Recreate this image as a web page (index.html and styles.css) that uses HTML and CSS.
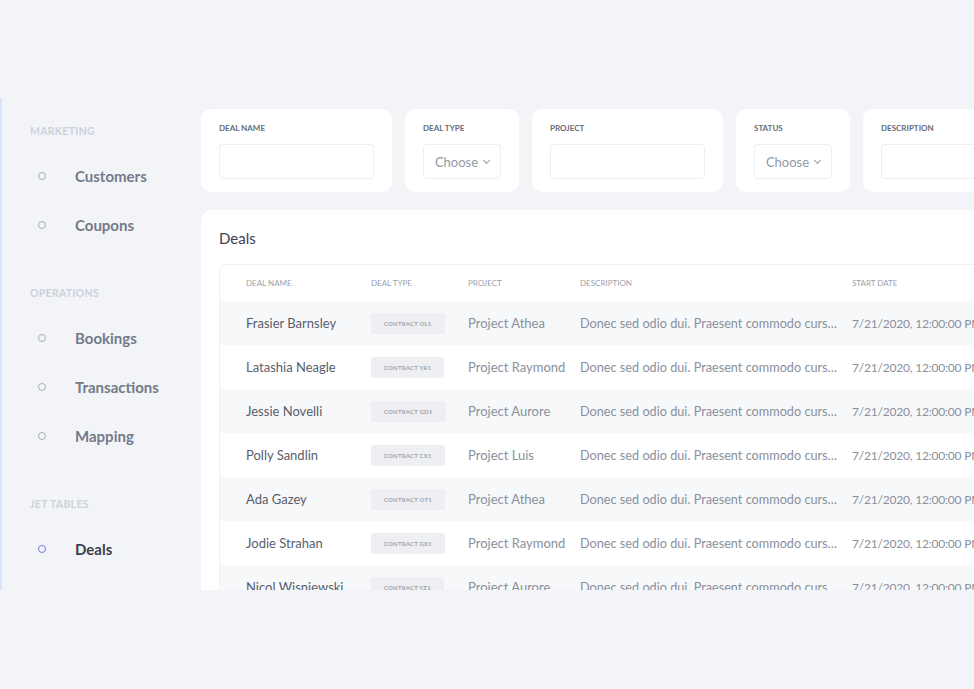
FILE: index.html
```html
<!DOCTYPE html>
<html lang="en">
<head>
    <meta charset="UTF-8">
    <meta name="viewport" content="width=device-width, initial-scale=1.0">
    <title>Deals</title>
    <link rel="stylesheet" href="styles.css">
</head>
<body>

    <div class="frame">
        <!-- Sidebar navigation -->
        <nav class="sidebar">
            <div class="nav-section">Marketing</div>
            <a class="nav-item"><span class="dot"></span>Customers</a>
            <a class="nav-item"><span class="dot"></span>Coupons</a>

            <div class="nav-section">Operations</div>
            <a class="nav-item"><span class="dot"></span>Bookings</a>
            <a class="nav-item"><span class="dot"></span>Transactions</a>
            <a class="nav-item"><span class="dot"></span>Mapping</a>

            <div class="nav-section">Jet Tables</div>
            <a class="nav-item active"><span class="dot"></span>Deals</a>
        </nav>

        <main class="main">
            <!-- Filters -->
            <div class="filters">
                <div class="filter-card wide">
                    <label>Deal Name</label>
                    <input type="text" class="field">
                </div>
                <div class="filter-card">
                    <label>Deal Type</label>
                    <div class="select">Choose <span class="chev"></span></div>
                </div>
                <div class="filter-card wide">
                    <label>Project</label>
                    <input type="text" class="field">
                </div>
                <div class="filter-card">
                    <label>Status</label>
                    <div class="select">Choose <span class="chev"></span></div>
                </div>
                <div class="filter-card wide">
                    <label>Description</label>
                    <input type="text" class="field">
                </div>
            </div>

            <!-- Deals table -->
            <div class="card">
                <h2>Deals</h2>
                <div class="table-wrap">
                    <table id="dealsTable">
                        <thead>
                            <tr>
                                <th>Deal Name</th>
                                <th>Deal Type</th>
                                <th>Project</th>
                                <th>Description</th>
                                <th>Start Date</th>
                            </tr>
                        </thead>
                        <tbody></tbody>
                    </table>
                </div>
            </div>
        </main>
    </div>

    <script>
        const deals = [
            ['Frasier Barnsley', 'Contract OL1', 'Project Athea'],
            ['Latashia Neagle', 'Contract YR1', 'Project Raymond'],
            ['Jessie Novelli', 'Contract GD1', 'Project Aurore'],
            ['Polly Sandlin', 'Contract CX1', 'Project Luis'],
            ['Ada Gazey', 'Contract OT1', 'Project Athea'],
            ['Jodie Strahan', 'Contract GX1', 'Project Raymond'],
            ['Nicol Wisniewski', 'Contract YZ1', 'Project Aurore']
        ];
        const desc = 'Donec sed odio dui. Praesent commodo cursus magna, vel scelerisque nisl consectetur et.';

        let rows = '';
        deals.forEach(d => {
            rows += `
                <tr>
                    <td class="name">${d[0]}</td>
                    <td><span class="badge">${d[1]}</span></td>
                    <td>${d[2]}</td>
                    <td><div class="desc">${desc}</div></td>
                    <td class="date">7/21/2020, 12:00:00 PM</td>
                </tr>
            `;
        });
        document.querySelector('#dealsTable tbody').innerHTML = rows;
    </script>
</body>
</html>
```

FILE: styles.css
```css
body {
    margin: 0;
    background: #f3f4f8;
    font-family: Lato, "Liberation Sans", sans-serif;
    color: #5d6372;
    overflow: hidden;
}
.frame {
    margin-top: 98px;
    height: 492px;
    display: flex;
    overflow: hidden;
    border-left: 2px solid #d6e5fb;
}

/* sidebar */
.sidebar {
    width: 171px;
    flex-shrink: 0;
    padding: 26px 0 0 28px;
    box-sizing: content-box;
}
.nav-section {
    font-size: 10.5px;
    font-weight: 700;
    text-transform: uppercase;
    color: #cdd1db;
    letter-spacing: 0.3px;
    height: 14px;
    line-height: 14px;
    margin: 0 0 13px;
}
.nav-item {
    display: flex;
    align-items: center;
    height: 49px;
    font-size: 15px;
    font-weight: 700;
    color: #737a89;
}
.nav-item + .nav-section {
    margin-top: 37px;
}
.dot {
    width: 6px;
    height: 6px;
    border: 1.5px solid #a7acb7;
    border-radius: 50%;
    margin: 0 29px 0 8px;
}
.nav-item.active {
    color: #3b404c;
}
.nav-item.active .dot {
    border-color: #6d7cf2;
}

/* main area */
.main {
    flex: 1;
    min-width: 0;
    padding-top: 11px;
}
.filters {
    display: flex;
    gap: 13px;
}
.filter-card {
    background: #fff;
    border-radius: 10px;
    height: 83px;
    box-sizing: border-box;
    padding: 13px 18px 0;
    flex-shrink: 0;
}
.filter-card.wide {
    width: 191px;
}
.filter-card label {
    display: block;
    font-size: 8px;
    font-weight: 700;
    text-transform: uppercase;
    color: #666b7a;
    height: 12px;
    line-height: 12px;
    margin-bottom: 10px;
}
.field {
    width: 155px;
    height: 35px;
    box-sizing: border-box;
    border: 1px solid #eceef3;
    border-radius: 4px;
    outline: none;
}
.select {
    width: 78px;
    height: 35px;
    box-sizing: border-box;
    border: 1px solid #eceef3;
    border-radius: 4px;
    font-size: 13px;
    color: #9399a6;
    display: flex;
    align-items: center;
    justify-content: center;
    gap: 6px;
}
.chev {
    width: 4px;
    height: 4px;
    border-right: 1px solid #9399a6;
    border-bottom: 1px solid #9399a6;
    transform: rotate(45deg);
    margin-top: -3px;
}

.card {
    margin-top: 18px;
    background: #fff;
    border-radius: 10px 0 0 0;
    padding: 18px 0 0 18px;
    height: 400px;
}
.card h2 {
    margin: 0 0 16px;
    font-size: 15px;
    font-weight: 400;
    color: #3d4250;
    line-height: 20px;
}
.table-wrap {
    border: 1px solid #eff1f5;
    border-right: none;
    border-radius: 8px 0 0 0;
    overflow: hidden;
}
table {
    border-collapse: collapse;
    table-layout: fixed;
    width: 900px;
}
th {
    height: 36px;
    font-size: 8px;
    font-weight: 400;
    text-transform: uppercase;
    color: #9ba1ad;
    text-align: left;
    padding: 0 12px;
}
td {
    height: 44px;
    font-size: 13px;
    color: #8a909c;
    padding: 0 12px;
    white-space: nowrap;
}
th:nth-child(1), td:nth-child(1) { width: 113px; padding-left: 26px; padding-right: 0; }
th:nth-child(2), td:nth-child(2) { width: 73px; }
th:nth-child(3), td:nth-child(3) { width: 88px; }
th:nth-child(4), td:nth-child(4) { width: 248px; }
tbody tr:nth-child(odd) {
    background: #f7f8fa;
}
td.name {
    color: #585e6c;
}
td.date {
    font-size: 12px;
    letter-spacing: -0.2px;
}
.badge {
    display: inline-block;
    background: #eeeff2;
    color: #9ea3ad;
    font-size: 6px;
    font-weight: 700;
    letter-spacing: 0.2px;
    text-transform: uppercase;
    padding: 7px 13px;
    border-radius: 3px;
}
.desc {
    overflow: hidden;
    text-overflow: ellipsis;
    white-space: nowrap;
    width: 260px;
    font-size: 12.7px;
}
```
